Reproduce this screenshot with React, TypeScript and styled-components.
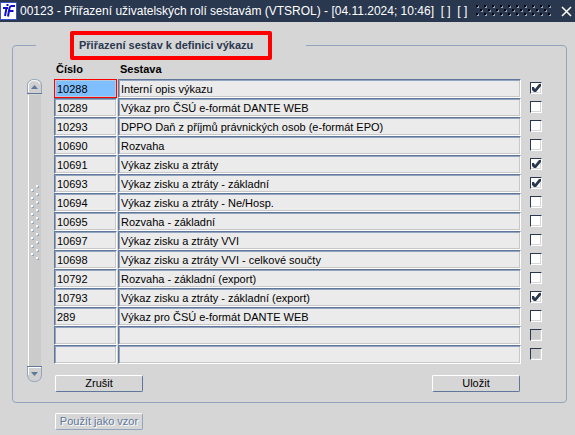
import React, { useState } from 'react';
import styled, { createGlobalStyle, css } from 'styled-components';

const GlobalStyle = createGlobalStyle`
  * { box-sizing: border-box; }
  body {
    margin: 0;
    background: #d6d6d6;
    color: #000;
    font-family: "Liberation Sans", Arial, sans-serif;
    font-size: 11px;
  }
`;

const Page = styled.div`
  min-height: 100vh;
  background: #d6d6d6;
`;

const TitleBar = styled.header`
  display: flex;
  align-items: center;
  height: 22px;
  padding: 0 3px 0 0;
  background: #29374f;
  color: #fff;
`;

const Title = styled.h1`
  margin: 0 9px 0 2px;
  font-size: 12px;
  font-weight: normal;
  line-height: 22px;
  white-space: pre;
`;

const Grip = styled.svg`
  display: block;
  flex: none;
`;

const CloseButton = styled.button`
  display: flex;
  margin-left: auto;
  padding: 0;
  border: 0;
  background: none;
  color: #fff;
`;

const Group = styled.fieldset`
  min-width: 0;
  margin: 9px 8px 0 12px;
  padding: 0 23px 10px 14px;
  border: 1px solid #93a5be;
  border-radius: 4px;
`;

const Legend = styled.legend`
  margin-left: 9px;
  padding: 0 34px;
`;

const Marked = styled.span`
  display: block;
  padding: 0 15px 0 5px;
  border: 4px solid #fe0000;
  border-radius: 2px;
  color: #29374f;
  font-size: 11px;
  font-weight: bold;
  line-height: 21px;
`;

const Columns = styled.div`
  display: flex;
  gap: 12px;
`;

const ScrollBar = styled.div`
  display: flex;
  flex-direction: column;
  align-items: center;
  flex: none;
  width: 15px;
  margin: 19px 0 10px;
`;

const ScrollButton = styled.button`
  display: block;
  padding: 0;
  border: 0;
  background: none;
  line-height: 0;
`;

const Track = styled.div`
  display: flex;
  flex: 1;
  align-items: center;
  justify-content: center;
  width: 13px;
  padding-bottom: 16px;
  border-left: 1px solid #fff;
  background: #cbcbcb;
`;

const Main = styled.div`
  flex: 1;
  min-width: 0;
`;

const Table = styled.table`
  width: 100%;
  border-collapse: collapse;
  table-layout: fixed;
`;

const HeadCell = styled.th<{ $width?: number }>`
  width: ${(p) => (p.$width ? `${p.$width}px` : 'auto')};
  height: 19px;
  padding: 0 2px;
  font-size: 11px;
  font-weight: bold;
  line-height: 18px;
  text-align: left;
  vertical-align: top;
`;

const Cell = styled.td<{ $kind?: 'number' | 'check' }>`
  height: 19px;
  padding: ${(p) =>
    p.$kind === 'check' ? '3px 0 4px 9px' : p.$kind === 'number' ? '0 1px 0 0' : '0'};
`;

const Field = styled.input<{ $active?: boolean }>`
  display: block;
  width: 100%;
  height: 19px;
  padding: 0 2px;
  border: 1px solid;
  border-color: #5f779b #fff #fff #5f779b;
  border-radius: 1px;
  outline: 0;
  background: #ebebeb;
  box-shadow: inset 1px 1px #93a5be, inset -1px -1px #c8c8c8;
  color: #000;
  font: 11px "Liberation Sans", Arial, sans-serif;
  ${(p) =>
    p.$active &&
    css`
      border-color: #f00;
      border-radius: 0;
      background: #80bfff;
      box-shadow: inset 0 0 0 1px #b9c9dc;
    `}
`;

const CheckLabel = styled.label`
  display: grid;
  width: 12px;
  height: 12px;
  > * { grid-area: 1 / 1; }
`;

const CheckInput = styled.input`
  appearance: none;
  width: 12px;
  height: 12px;
  margin: 0;
  border: 1px solid;
  border-color: #29374f #fff #fff #29374f;
  background: #fff;
  box-shadow: inset -1px -1px #d6d6d6;
  &:disabled { background: #cbcbcb; }
`;

const CheckMark = styled.svg`
  pointer-events: none;
  z-index: 1;
`;

const Actions = styled.div`
  display: flex;
  justify-content: space-between;
  margin-top: 11px;
  padding: 0 23px 0 1px;
`;

const Button = styled.button`
  width: 88px;
  height: 17px;
  padding: 0;
  border: 1px solid;
  border-color: #fff #5f779b #5f779b #fff;
  border-radius: 2px;
  background: #d6d6d6;
  color: #000;
  font: 11px "Liberation Sans", Arial, sans-serif;
  line-height: 15px;
  &:disabled {
    border-color: #fff #93a5be #93a5be #fff;
    color: #5f779b;
    text-shadow: 1px 1px #fff;
  }
`;

const Footer = styled.footer`
  padding: 10px 12px 5px 55px;
`;

type Row = { id: string; name: string; checked: boolean };

const ROWS: Row[] = [
  { id: '10288', name: 'Interní opis výkazu', checked: true },
  { id: '10289', name: 'Výkaz pro ČSÚ e-formát DANTE WEB', checked: false },
  { id: '10293', name: 'DPPO Daň z příjmů právnických osob (e-formát EPO)', checked: false },
  { id: '10690', name: 'Rozvaha', checked: false },
  { id: '10691', name: 'Výkaz zisku a ztráty', checked: true },
  { id: '10693', name: 'Výkaz zisku a ztráty - základní', checked: true },
  { id: '10694', name: 'Výkaz zisku a ztráty - Ne/Hosp.', checked: false },
  { id: '10695', name: 'Rozvaha - základní', checked: false },
  { id: '10697', name: 'Výkaz zisku a ztráty VVI', checked: false },
  { id: '10698', name: 'Výkaz zisku a ztráty VVI - celkové součty', checked: false },
  { id: '10792', name: 'Rozvaha - základní (export)', checked: false },
  { id: '10793', name: 'Výkaz zisku a ztráty - základní (export)', checked: true },
  { id: '289', name: 'Výkaz pro ČSÚ e-formát DANTE WEB', checked: false },
  { id: '', name: '', checked: false },
  { id: '', name: '', checked: false },
];

function Logo() {
  return (
    <svg width="18" height="20" viewBox="0 0 18 20" aria-hidden="true">
      <rect x="0.500" y="1.500" width="16" height="17" fill="#fff" stroke="#3c50c8" />
      <g fill="none" stroke="#1010c8" strokeWidth="2">
        <path d="M3 7H8M6.500 7L5 15" />
        <path d="M6.500 4H8.500" />
        <path d="M15 5H11.500Q10 5 9.500 7L8 15.500M8.500 10H13.500" />
      </g>
    </svg>
  );
}

function TitleGrip() {
  const dots: [number, number][] = [];
  for (let row = 0; row < 3; row++) {
    const odd = row % 2;
    for (let i = 0; i < 10 - odd; i++) dots.push([i * 8 + odd * 4, row * 4]);
  }
  return (
    <Grip width="76" height="12" viewBox="0 0 76 12" shapeRendering="crispEdges" aria-hidden="true">
      {dots.map(([x, y]) => (
        <g key={`${x}-${y}`}>
          <rect x={x + 1} y={y + 1} width="2" height="2" fill="#93a5be" />
          <path d={`M${x} ${y}h2v2h-2z`} fill="#000" />
        </g>
      ))}
    </Grip>
  );
}

function TrackGrip() {
  const dots: [number, number][] = [];
  for (let i = 0; i < 19; i++) dots.push([i % 2 ? 0 : 5, i * 4]);
  return (
    <Grip width="8" height="76" viewBox="0 0 8 76" shapeRendering="crispEdges" aria-hidden="true">
      {dots.map(([x, y]) => (
        <g key={y}>
          <rect x={x + 1} y={y + 1} width="2" height="2" fill="#93a5be" />
          <rect x={x} y={y} width="2" height="2" fill="#fff" />
        </g>
      ))}
    </Grip>
  );
}

function ScrollArrow({ down }: { down?: boolean }) {
  return (
    <svg width="15" height="16" viewBox="0 0 15 16" aria-hidden="true">
      {down ? (
        <>
          <path d="M.5 .5H14.500V9Q14 15.500 7.500 15.500Q1 15.500 .5 9Z" fill="#d0d0d0" stroke="#93a5be" />
          <path d="M1 1.500H14M1.500 2V9" stroke="#fff" fill="none" />
          <path d="M0 .5H15" stroke="#5f779b" />
          <path d="M4 6H11L7.500 10Z" fill="#5f779b" />
        </>
      ) : (
        <>
          <path d="M.5 14.500V6Q1 .5 7.500 .5Q14 .5 14.500 6V14.500Z" fill="#d0d0d0" stroke="#93a5be" />
          <path d="M1.500 13V6Q2 1.500 7.500 1.500Q12 1.500 13 5" stroke="#fff" fill="none" />
          <path d="M0 14.500H15" stroke="#5f779b" />
          <path d="M4 10H11L7.500 6Z" fill="#5f779b" />
        </>
      )}
    </svg>
  );
}

export default function App() {
  const [rows, setRows] = useState(ROWS);
  const update = (index: number, patch: Partial<Row>) =>
    setRows((all) => all.map((row, i) => (i === index ? { ...row, ...patch } : row)));

  return (
    <>
      <GlobalStyle />
      <Page>
        <TitleBar>
          <Logo />
          <Title>00123 - Přiřazení uživatelských rolí sestavám (VTSROL) - [04.11.2024; 10:46]  [ ]  [ ]</Title>
          <TitleGrip />
          <CloseButton type="button" aria-label="Zavřít">
            <svg width="11" height="11" viewBox="0 0 11 11" aria-hidden="true">
              <path d="M1 1L10 10M10 1L1 10" stroke="currentColor" strokeWidth="1.500" />
            </svg>
          </CloseButton>
        </TitleBar>
        <Group>
          <Legend>
            <Marked>Přiřazení sestav k definici výkazu</Marked>
          </Legend>
          <Columns>
            <ScrollBar>
              <ScrollButton type="button" aria-label="Nahoru"><ScrollArrow /></ScrollButton>
              <Track><TrackGrip /></Track>
              <ScrollButton type="button" aria-label="Dolů"><ScrollArrow down /></ScrollButton>
            </ScrollBar>
            <Main>
              <Table>
                <thead>
                  <tr>
                    <HeadCell $width={64}>Číslo</HeadCell>
                    <HeadCell>Sestava</HeadCell>
                    <HeadCell $width={22} aria-label="Přiřazeno" />
                  </tr>
                </thead>
                <tbody>
                  {rows.map((row, i) => (
                    <tr key={i}>
                      <Cell $kind="number">
                        <Field
                          aria-label="Číslo"
                          value={row.id}
                          $active={i === 0}
                          onChange={(e) => update(i, { id: e.target.value })}
                        />
                      </Cell>
                      <Cell>
                        <Field
                          aria-label="Sestava"
                          value={row.name}
                          onChange={(e) => update(i, { name: e.target.value })}
                        />
                      </Cell>
                      <Cell $kind="check">
                        <CheckLabel>
                          <CheckInput
                            type="checkbox"
                            aria-label={`Přiřadit ${row.name}`}
                            checked={row.checked}
                            disabled={!row.id}
                            onChange={(e) => update(i, { checked: e.target.checked })}
                          />
                          {row.checked && (
                            <CheckMark width="12" height="12" viewBox="0 0 12 12" aria-hidden="true">
                              <path d="M2 5L4 5L5 7L9 2L11 2V4L6 10H4L2 8Z" fill="#29374f" />
                            </CheckMark>
                          )}
                        </CheckLabel>
                      </Cell>
                    </tr>
                  ))}
                </tbody>
              </Table>
              <Actions>
                <Button type="button">Zrušit</Button>
                <Button type="button">Uložit</Button>
              </Actions>
            </Main>
          </Columns>
        </Group>
        <Footer>
          <Button type="button" disabled>Použít jako vzor</Button>
        </Footer>
      </Page>
    </>
  );
}
